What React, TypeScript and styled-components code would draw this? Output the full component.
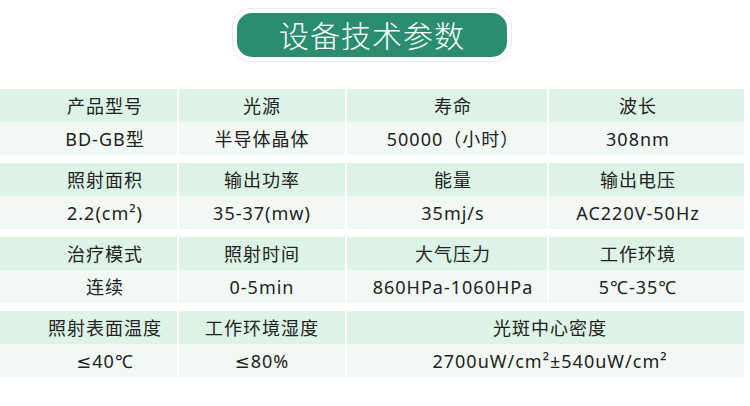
import React from "react";
import styled, { createGlobalStyle } from "styled-components";

const GlobalStyle = createGlobalStyle`
  html, body {
    margin: 0;
    padding: 0;
    background: #ffffff;
  }
  body {
    width: 750px;
    height: 406px;
    overflow: hidden;
    font-family: "Noto Sans", "DejaVu Sans", "Noto Sans CJK SC", sans-serif;
  }
`;

type Cell = { label: string; value: string; span?: number };

const groups: Cell[][] = [
  [
    { label: "产品型号", value: "BD-GB型" },
    { label: "光源", value: "半导体晶体" },
    { label: "寿命", value: "50000（小时）" },
    { label: "波长", value: "308nm" },
  ],
  [
    { label: "照射面积", value: "2.2(cm²)" },
    { label: "输出功率", value: "35-37(mw)" },
    { label: "能量", value: "35mj/s" },
    { label: "输出电压", value: "AC220V-50Hz" },
  ],
  [
    { label: "治疗模式", value: "连续" },
    { label: "照射时间", value: "0-5min" },
    { label: "大气压力", value: "860HPa-1060HPa" },
    { label: "工作环境", value: "5℃-35℃" },
  ],
  [
    { label: "照射表面温度", value: "≤40℃" },
    { label: "工作环境湿度", value: "≤80%" },
    { label: "光斑中心密度", value: "2700uW/cm²±540uW/cm²", span: 2 },
  ],
];

// text offsets per column so the labels sit where the reference has them
const colPad = ["0 0 0 33px", "0", "0 0 0 12px", "0 17px 0 0"];

function SpecTable() {
  return (
    <Page>
      <TitleBar>
        <TitleRing>
          <TitlePill>设备技术参数</TitlePill>
        </TitleRing>
      </TitleBar>
      <Table>
        {groups.map((group, gi) => {
          let col = 0;
          const cols = group.map((c) => {
            const start = col;
            col += c.span || 1;
            return start;
          });
          return (
            <Group key={gi}>
              {group.map((c, i) => (
                <HeadCell
                  key={"h" + i}
                  $span={c.span || 1}
                  $pad={c.span ? "0 0 0 9px" : colPad[cols[i]]}
                >
                  {c.label}
                </HeadCell>
              ))}
              {group.map((c, i) => (
                <ValueCell
                  key={"v" + i}
                  $span={c.span || 1}
                  $pad={c.span ? "0 0 0 9px" : colPad[cols[i]]}
                >
                  {c.value}
                </ValueCell>
              ))}
            </Group>
          );
        })}
      </Table>
    </Page>
  );
}

export default function App() {
  return (
    <>
      <GlobalStyle />
      <SpecTable />
    </>
  );
}

const Page = styled.div`
  width: 750px;
  height: 406px;
  display: flex;
  flex-direction: column;
`;

const TitleBar = styled.div`
  display: flex;
  justify-content: center;
  padding: 8px 6px 0 0;
  height: 89px;
  box-sizing: border-box;
`;

const TitleRing = styled.div`
  height: 54px;
  width: 280px;
  box-sizing: border-box;
  padding: 4px;
  border: 1px solid #e9ecea;
  border-radius: 19px;
  background: #ffffff;
`;

const TitlePill = styled.div`
  height: 100%;
  border-radius: 15px;
  background: #2b8d6f;
  color: #ffffff;
  font-family: "Noto Sans CJK SC", sans-serif;
  font-size: 30px;
  font-weight: 300;
  letter-spacing: 1px;
  display: flex;
  align-items: center;
  justify-content: center;
  line-height: 1;
  padding-bottom: 2px;
  box-sizing: border-box;
`;

const Table = styled.div`
  width: 744px;
  display: flex;
  flex-direction: column;
  gap: 8px;
`;

const Group = styled.div`
  display: grid;
  grid-template-columns: 177px 166px 200px 195px;
  grid-auto-rows: 33px;
  column-gap: 2px;
`;

const BaseCell = styled.div<{ $span: number; $pad: string }>`
  grid-column: span ${(p) => p.$span};
  display: flex;
  align-items: center;
  justify-content: center;
  padding: ${(p) => p.$pad};
  font-size: 18px;
  letter-spacing: 1px;
  color: #222222;
  white-space: nowrap;
  line-height: 1;
`;

const HeadCell = styled(BaseCell)`
  background: #ddf3e5;
`;

const ValueCell = styled(BaseCell)`
  background: #f2f9f4;
`;
